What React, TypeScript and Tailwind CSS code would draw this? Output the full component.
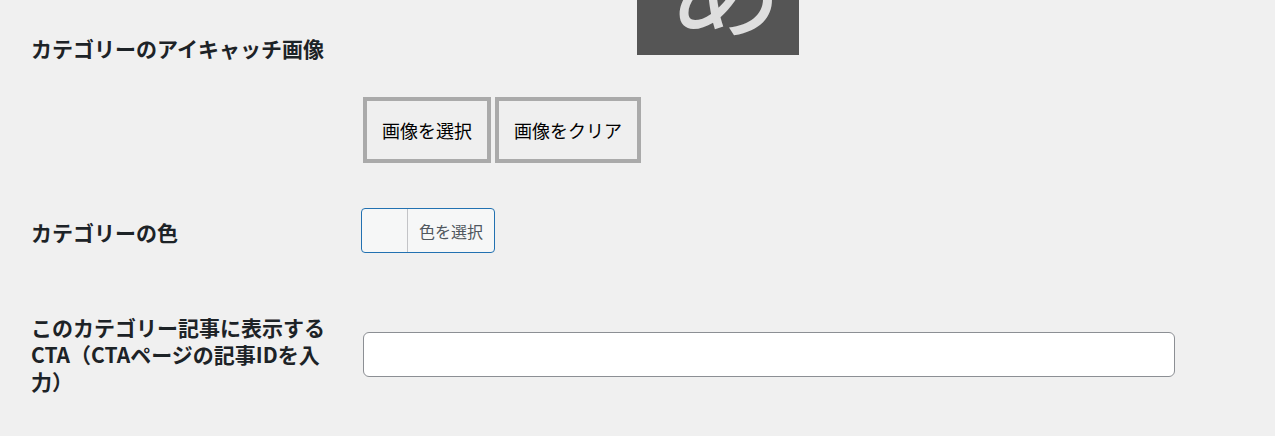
import React from "react";

const FONT = '"Noto Sans CJK JP", "Noto Sans", sans-serif';

export default function App() {
  return (
    <div
      className="w-[1275px] h-[436px] overflow-hidden bg-[#f0f0f0] text-[#1d2327]"
      style={{ fontFamily: FONT }}
    >
      {/* Featured image row */}
      <div className="flex">
        <div className="w-[363px] shrink-0 pl-[31px] pt-[35px] text-[21px] leading-[27px] font-bold">
          カテゴリーのアイキャッチ画像
        </div>
        <div className="flex flex-col">
          <div className="ml-[274px] w-[162px] h-[55px] bg-[#555555] relative overflow-hidden">
            <span className="absolute left-[30px] top-[-80px] text-[116px] leading-none text-[#dedede]">
              あ
            </span>
          </div>
          <div className="mt-[42px] flex gap-[4px] h-[66px]">
            <button className="w-[128px] h-full border-[4px] border-[#aaaaaa] bg-[#efefef] text-[18px] text-black">
              画像を選択
            </button>
            <button className="w-[146px] h-full border-[4px] border-[#aaaaaa] bg-[#efefef] text-[18px] text-black">
              画像をクリア
            </button>
          </div>
        </div>
      </div>

      {/* Colour row */}
      <div className="flex mt-[45px]">
        <div className="w-[361px] shrink-0 pl-[31px] pt-[11px] text-[21px] leading-[27px] font-bold">
          カテゴリーの色
        </div>
        <button className="flex h-[45px] w-[134px] rounded-[4px] border border-[#2271b1] bg-[#f6f7f7] overflow-hidden">
          <span className="w-[46px] h-full border-r border-[#c3c4c7]" />
          <span className="flex-1 h-full flex items-center justify-center text-[16px] text-[#50575e]">
            色を選択
          </span>
        </button>
      </div>

      {/* CTA row */}
      <div className="flex items-center mt-[61px]">
        <div className="w-[363px] shrink-0 pl-[31px] text-[21px] leading-[27px] font-bold">
          このカテゴリー記事に表示する
          <br />
          CTA（CTAページの記事IDを入
          <br />
          力）
        </div>
        <input
          type="text"
          className="w-[812px] h-[45px] rounded-[6px] border border-[#8c8f94] bg-white"
        />
      </div>
    </div>
  );
}
